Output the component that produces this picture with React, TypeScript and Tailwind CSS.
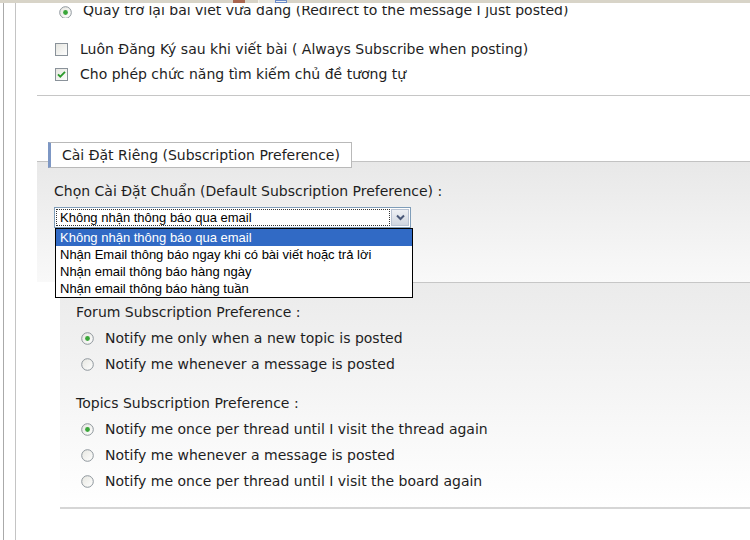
import React from "react";

function Radio({ checked, className }: { checked?: boolean; className?: string }) {
  return (
    <svg width="13" height="13" viewBox="0 0 13 13" className={"shrink-0 " + (className ?? "")}>
      <defs>
        <linearGradient id="rg" x1="0" y1="0" x2="1" y2="1">
          <stop offset="0" stopColor="#e6e6e0" />
          <stop offset="1" stopColor="#ffffff" />
        </linearGradient>
      </defs>
      <circle cx="6.5" cy="6.5" r="5.8" fill="url(#rg)" stroke="#8e969c" strokeWidth="1" />
      {checked && <circle cx="6.5" cy="6.5" r="2.4" fill="#3aa63a" />}
    </svg>
  );
}

function Checkbox({ checked }: { checked?: boolean }) {
  return (
    <svg width="13" height="13" viewBox="0 0 13 13" className="shrink-0">
      <defs>
        <linearGradient id="cg" x1="0" y1="0" x2="1" y2="1">
          <stop offset="0" stopColor="#e4e4de" />
          <stop offset="1" stopColor="#ffffff" />
        </linearGradient>
      </defs>
      <rect x="0.5" y="0.5" width="12" height="12" fill="url(#cg)" stroke="#8a929a" />
      {checked && (
        <path d="M3 6.3 L5.3 8.7 L10 3.9" fill="none" stroke="#2b9a2b" strokeWidth="1.8" />
      )}
    </svg>
  );
}

const options = [
  "Không nhận thông báo qua email",
  "Nhận Email thông báo ngay khi có bài viết hoặc trả lời",
  "Nhận email thông báo hàng ngày",
  "Nhận email thông báo hàng tuần",
];

export default function App() {
  return (
    <div
      className="w-[750px] h-[540px] overflow-hidden bg-white flex flex-col text-[14px] text-[#1e1e1e]"
      style={{ fontFamily: '"DejaVu Sans", Verdana, sans-serif' }}
    >
      {/* top chrome strip */}
      <div className="h-[3px] shrink-0 bg-[#d8d4c8] flex">
        <div className="w-[233px]" />
        <div className="w-[12px] bg-[#a8654e]" />
        <div className="w-[13px]" />
        <div className="w-px bg-[#f4f2ea]" />
        <div className="w-[16px] bg-[#e8e6de]" />
        <div className="w-[12px] border border-[#6c8cc8] bg-[#f0f0f0]" />
      </div>

      <div className="flex flex-1">
        {/* left gutter */}
        <div className="w-[3px] shrink-0" />
        <div className="w-px bg-[#aaaaaa] shrink-0" />
        <div className="w-[11px] shrink-0" />
        <div className="w-px bg-[#c4c4c4] shrink-0" />
        <div className="w-[21px] shrink-0" />

        <div className="flex-1 flex flex-col">
          {/* clipped first row */}
          <div className="h-[12px] mt-[3px] overflow-hidden">
            <div className="flex items-center gap-[11px] pl-[22px] mt-[-6px] h-[20px]">
              <Radio checked className="mt-[4px]" />
              <span>Quay trở lại bài viết vừa đăng (Redirect to the message I just posted)</span>
            </div>
          </div>

          <div className="flex items-center gap-[12px] pl-[18px] mt-[24px] h-[14px]">
            <Checkbox />
            <span>Luôn Đăng Ký sau khi viết bài ( Always Subscribe when posting)</span>
          </div>
          <div className="flex items-center gap-[12px] pl-[18px] mt-[11px] h-[14px]">
            <Checkbox checked />
            <span>Cho phép chức năng tìm kiếm chủ đề tương tự</span>
          </div>

          <div className="h-px bg-[#c6c6c6] mt-[14px]" />

          {/* legend */}
          <div className="relative z-10 ml-[11px] mt-[46px] w-[304px] h-[26px] bg-white border border-[#b9b9b9] border-l-[3px] border-l-[#7d97c4] flex items-center pl-[11px] mb-[-7px]">
            Cài Đặt Riêng (Subscription Preference)
          </div>

          {/* outer panel */}
          <div className="border-t border-[#c2c2c2] bg-gradient-to-b from-[#e8e8e8] to-[#f9f9f9] h-[121px] pl-[17px] pt-[21px] flex flex-col">
            <div className="h-[17px] flex items-center">
              Chọn Cài Đặt Chuẩn (Default Subscription Preference) :
            </div>
            <div
              className="relative mt-[7px] w-[357px] h-[21px] border border-[#7f9db9] bg-white flex text-[13px]"
              style={{ fontFamily: '"Liberation Sans", Arial, sans-serif' }}
            >
              <div className="flex-1 m-px border border-dotted border-[#333] flex items-center pl-[3px] text-black">
                Không nhận thông báo qua email
              </div>
              <div className="w-[18px] my-px mr-px bg-gradient-to-b from-[#eef0f4] to-[#d0d6e0] border border-[#b8c2d2] flex items-center justify-center">
                <svg width="9" height="7" viewBox="0 0 9 7">
                  <path d="M1 1.5 L4.5 5 L8 1.5" fill="none" stroke="#4a5878" strokeWidth="2" />
                </svg>
              </div>

              {/* open list */}
              <div className="absolute left-0 top-[20px] w-[358px] border border-black bg-white z-20 flex flex-col text-black">
                {options.map((o, i) => (
                  <div
                    key={o}
                    className={
                      i === 0
                        ? "h-[17px] flex items-center pl-[4px] bg-[#316ac5] text-white"
                        : "h-[17px] flex items-center pl-[4px]"
                    }
                  >
                    {o}
                  </div>
                ))}
              </div>
            </div>
          </div>

          {/* inner panel */}
          <div className="ml-[23px] border-t border-[#c6c6c6] border-b-2 border-b-[#d6d6d6] bg-gradient-to-b from-[#ebebeb] to-[#ffffff] h-[227px] pl-[16px] pt-[21px] flex flex-col">
            <div className="h-[17px] flex items-center">Forum Subscription Preference :</div>
            <div className="flex items-center gap-[11px] pl-[5px] mt-[9px] h-[17px]">
              <Radio checked />
              <span>Notify me only when a new topic is posted</span>
            </div>
            <div className="flex items-center gap-[11px] pl-[5px] mt-[9px] h-[17px]">
              <Radio />
              <span>Notify me whenever a message is posted</span>
            </div>
            <div className="h-[17px] flex items-center mt-[22px]">Topics Subscription Preference :</div>
            <div className="flex items-center gap-[11px] pl-[5px] mt-[9px] h-[17px]">
              <Radio checked />
              <span>Notify me once per thread until I visit the thread again</span>
            </div>
            <div className="flex items-center gap-[11px] pl-[5px] mt-[9px] h-[17px]">
              <Radio />
              <span>Notify me whenever a message is posted</span>
            </div>
            <div className="flex items-center gap-[11px] pl-[5px] mt-[9px] h-[17px]">
              <Radio />
              <span>Notify me once per thread until I visit the board again</span>
            </div>
          </div>
        </div>
      </div>
    </div>
  );
}
